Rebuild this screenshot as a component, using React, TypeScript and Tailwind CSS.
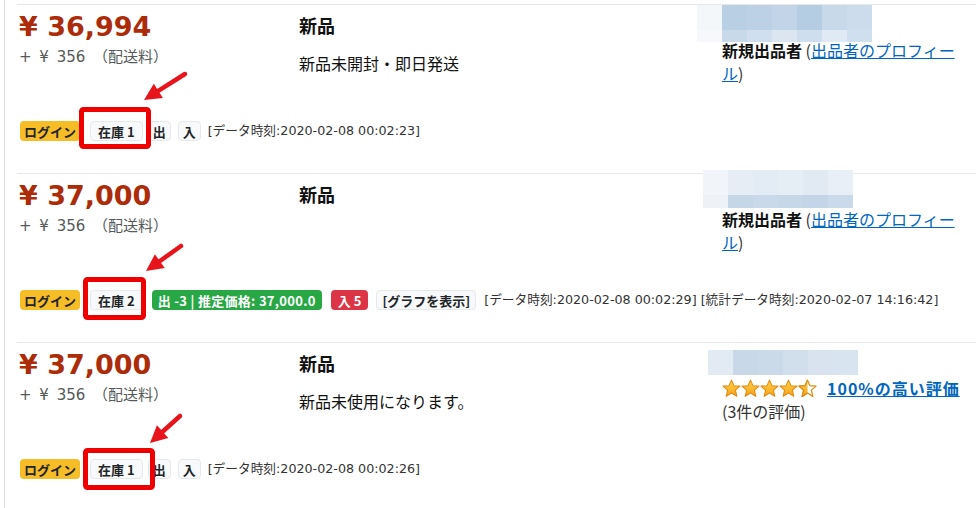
import React from "react";

const JP = { fontFamily: '"Noto Sans CJK JP", "Noto Sans", sans-serif' };
const LAT = { fontFamily: '"DejaVu Sans", "Noto Sans CJK JP", sans-serif' };

type BadgeKind = "warn" | "light" | "stock" | "success" | "danger" | "graph";

function Badge({ kind, ml, children }: { kind: BadgeKind; ml: number; children: React.ReactNode }) {
  const cls =
    kind === "warn"
      ? "bg-[#f6bd27] text-[#212529] px-[4px]"
      : kind === "success"
      ? "bg-[#28a745] text-white px-[6px] tracking-[0.3px]"
      : kind === "danger"
      ? "bg-[#dc3545] text-white px-[7px]"
      : kind === "stock"
      ? "bg-[#f8f9fa] text-[#212529] border border-[#e6e9ec] px-[7px]"
      : kind === "graph"
      ? "bg-[#f8f9fa] text-[#212529] border border-[#e6e9ec] px-[5px]"
      : "bg-[#f8f9fa] text-[#212529] border border-[#e6e9ec] px-[4px]";
  return (
    <span
      className={`inline-flex items-center h-[20px] rounded-[4px] text-[13px] font-bold leading-none whitespace-nowrap ${cls}`}
      style={{ marginLeft: ml }}
    >
      {children}
    </span>
  );
}

function Blur({ top, bottom, topH, botH }: { top: string[]; bottom: string[]; topH: number; botH: number }) {
  return (
    <div className="flex">
      {top.map((c, i) => (
        <div key={i} className="flex flex-col w-[25px]">
          <div style={{ height: topH, background: c }} />
          {botH > 0 && <div style={{ height: botH, background: bottom[i] }} />}
        </div>
      ))}
    </div>
  );
}

const STAR = "10,1.2 12.6,7 19,7.5 14.1,11.7 15.6,18.3 10,14.8 4.4,18.3 5.9,11.7 1,7.5 7.4,7";

function Star({ half }: { half?: boolean }) {
  const id = half ? "sh" : "sf";
  return (
    <svg width="19" height="19" viewBox="0 0 20 20">
      <defs>
        <linearGradient id={id + "g"} x1="0" y1="0" x2="0" y2="1">
          <stop offset="0" stopColor="#ffd24a" />
          <stop offset="1" stopColor="#f7a21b" />
        </linearGradient>
        <clipPath id={id + "c"}>
          <rect x="0" y="0" width="10" height="20" />
        </clipPath>
      </defs>
      {half ? (
        <>
          <polygon points={STAR} fill="#fff" stroke="#e08b10" strokeWidth="1.3" strokeLinejoin="round" />
          <polygon
            points={STAR}
            fill={`url(#${id}g)`}
            stroke="#e08b10"
            strokeWidth="1.3"
            strokeLinejoin="round"
            clipPath={`url(#${id}c)`}
          />
        </>
      ) : (
        <polygon points={STAR} fill={`url(#${id}g)`} stroke="#e08b10" strokeWidth="1.1" strokeLinejoin="round" />
      )}
    </svg>
  );
}

type Row = {
  price: string;
  desc?: string;
  blur: { ml: number; mt: number; top: string[]; bottom: string[]; topH: number; botH: number };
  rating?: boolean;
  badges: { kind: BadgeKind; text: string; ml: number }[];
  times: string;
  timesMl: number;
};

const rows: Row[] = [
  {
    price: "¥ 36,994",
    desc: "新品未開封・即日発送",
    blur: {
      ml: -8,
      mt: 0,
      top: ["#f4f7fa", "#b8cfe4", "#bcd1e6", "#c2d5e8", "#b5cde2", "#c8d9ea", "#ccdcec"],
      bottom: ["#f6f8fb", "#c8d9ea", "#d0dfed", "#dbe6f1", "#cfdeed", "#e0eaf4", "#d0dfee"],
      topH: 25,
      botH: 12,
    },
    badges: [
      { kind: "warn", text: "ログイン", ml: 0 },
      { kind: "stock", text: "在庫 1", ml: 10 },
      { kind: "light", text: "出", ml: 5 },
      { kind: "light", text: "入", ml: 7 },
    ],
    times: "[データ時刻:2020-02-08 00:02:23]",
    timesMl: 7,
  },
  {
    price: "¥ 37,000",
    blur: {
      ml: -2,
      mt: -4,
      top: ["#f1f4f8", "#e6edf5", "#e3ebf4", "#e5edf5", "#e1eaf3", "#e8eff6"],
      bottom: ["#eef2f7", "#c5d6e7", "#c9d9e9", "#c6d7e8", "#c4d5e7", "#cbdaea"],
      topH: 25,
      botH: 13,
    },
    badges: [
      { kind: "warn", text: "ログイン", ml: 0 },
      { kind: "stock", text: "在庫 2", ml: 10 },
      { kind: "success", text: "出 -3 | 推定価格: 37,000.0", ml: 9 },
      { kind: "danger", text: "入 5", ml: 9 },
      { kind: "graph", text: "[グラフを表示]", ml: 8 },
    ],
    times: "[データ時刻:2020-02-08 00:02:29] [統計データ時刻:2020-02-07 14:16:42]",
    timesMl: 8,
  },
  {
    price: "¥ 37,000",
    desc: "新品未使用になります。",
    blur: {
      ml: 3,
      mt: 7,
      top: ["#e2eaf3", "#c8d8e8", "#cadae9", "#d1dfec", "#d8e3ef", "#d8e4ef"],
      bottom: [],
      topH: 25,
      botH: 0,
    },
    rating: true,
    badges: [
      { kind: "warn", text: "ログイン", ml: 0 },
      { kind: "stock", text: "在庫 1", ml: 10 },
      { kind: "light", text: "出", ml: 5 },
      { kind: "light", text: "入", ml: 7 },
    ],
    times: "[データ時刻:2020-02-08 00:02:26]",
    timesMl: 7,
  },
];

function arrow(tx: number, ty: number, hx: number, hy: number) {
  const dx = hx - tx;
  const dy = hy - ty;
  const len = Math.sqrt(dx * dx + dy * dy);
  const ux = dx / len;
  const uy = dy / len;
  const hl = 17;
  const hw = 8.5;
  const bx = hx - ux * hl;
  const by = hy - uy * hl;
  const px = -uy;
  const py = ux;
  return {
    line: { x1: tx, y1: ty, x2: bx + ux * 2, y2: by + uy * 2 },
    head: `${hx},${hy} ${bx + px * hw},${by + py * hw} ${bx - px * hw},${by - py * hw}`,
  };
}

const arrows = [arrow(185, 74, 144, 100), arrow(181, 246, 146, 271), arrow(180, 416, 150, 443)];
const rects = [
  { x: 79, y: 107, w: 72, h: 42 },
  { x: 83, y: 277, w: 63, h: 43 },
  { x: 83, y: 448, w: 72, h: 42 },
];

export default function App() {
  return (
    <div className="relative w-[976px] h-[508px] bg-white overflow-hidden text-[#111]" style={JP}>
      <div className="ml-[4px] h-full border-l border-[#dddddd] pt-[4px] pl-[12px]">
        {rows.map((r, i) => (
          <div key={i} className="h-[169px] border-t border-[#e7e7e7] flex flex-col">
            <div className="h-[116px] flex">
              <div className="w-[282px] pl-[2px] pt-[6px]">
                <div className="text-[27px] font-bold leading-[32px] text-[#ac2b08]" style={LAT}>
                  {r.price}
                </div>
                <div
                  className="mt-[3px] text-[15px] leading-[22px] text-[#565959] whitespace-nowrap [word-spacing:3px]"
                  style={LAT}
                >
                  + ¥ 356 （配送料）
                </div>
              </div>
              <div className="w-[406px] pt-[7px]">
                <div className="text-[18px] font-bold leading-[26px]">新品</div>
                {r.desc && <div className="mt-[13px] text-[16px] leading-[24px]">{r.desc}</div>}
              </div>
              <div className="flex-1 min-w-0">
                <div className="h-[34px] flex flex-col">
                  <div style={{ marginLeft: r.blur.ml, marginTop: r.blur.mt }}>
                    <Blur top={r.blur.top} bottom={r.blur.bottom} topH={r.blur.topH} botH={r.blur.botH} />
                  </div>
                </div>
                {r.rating ? (
                  <div className="pl-[17px] relative z-10">
                    <div className="flex items-center h-[24px] mt-[-1px]">
                      <div className="flex items-center">
                        <Star />
                        <Star />
                        <Star />
                        <Star />
                        <Star half />
                      </div>
                      <a className="ml-[10px] text-[16px] font-bold text-[#0066c0] underline leading-[24px] tracking-[1px]">
                        100%の高い評価
                      </a>
                    </div>
                    <div className="text-[16px] leading-[22px] text-[#333]">(3件の評価)</div>
                  </div>
                ) : (
                  <div className="pl-[17px] text-[16px] leading-[23px] relative z-10 whitespace-nowrap">
                    <div>
                      <span className="font-bold">新規出品者</span>
                      <span className="text-[#333]"> (</span>
                      <a className="text-[#0066c0] underline">出品者のプロフィー</a>
                    </div>
                    <div>
                      <a className="text-[#0066c0] underline">ル</a>
                      <span className="text-[#333]">)</span>
                    </div>
                  </div>
                )}
              </div>
            </div>
            <div className="h-[20px] flex items-center pl-[3px]">
              {r.badges.map((b, j) => (
                <Badge key={j} kind={b.kind} ml={b.ml}>
                  {b.text}
                </Badge>
              ))}
              <span
                className="text-[12.7px] text-[#333] whitespace-nowrap leading-none"
                style={{ ...LAT, marginLeft: r.timesMl }}
              >
                {r.times}
              </span>
            </div>
          </div>
        ))}
      </div>
      <svg className="absolute inset-0 pointer-events-none" width="976" height="508">
        {rects.map((q, i) => (
          <rect
            key={i}
            x={q.x + 2.5}
            y={q.y + 2.5}
            width={q.w - 5}
            height={q.h - 5}
            rx="2"
            fill="none"
            stroke="#ee0000"
            strokeWidth="5"
          />
        ))}
        {arrows.map((a, i) => (
          <g key={i}>
            <line {...a.line} stroke="#e8141b" strokeWidth="4.5" strokeLinecap="round" />
            <polygon points={a.head} fill="#e8141b" />
          </g>
        ))}
      </svg>
    </div>
  );
}
